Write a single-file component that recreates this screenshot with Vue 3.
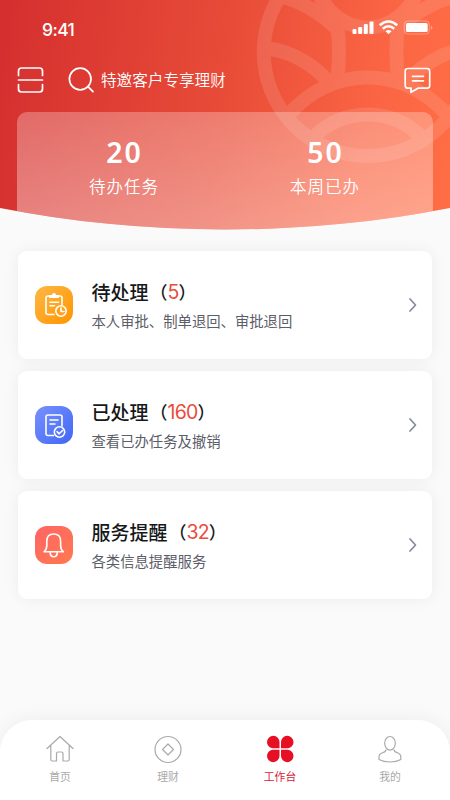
<script setup>
const stats = [
  { value: '20', label: '待办任务' },
  { value: '50', label: '本周已办' },
]
const cards = [
  { icon: 'pending', title: '待处理', count: 5, desc: '本人审批、制单退回、审批退回' },
  { icon: 'done', title: '已处理', count: 160, desc: '查看已办任务及撤销' },
  { icon: 'bell', title: '服务提醒', count: 32, desc: '各类信息提醒服务' },
]
const tabs = [
  { icon: 'home', label: '首页' },
  { icon: 'coin', label: '理财' },
  { icon: 'work', label: '工作台', active: true },
  { icon: 'user', label: '我的' },
]
</script>

<template>
  <div class="screen">
    <header class="hero">
      <svg class="pattern" width="450" height="230" viewBox="0 0 450 230" fill="none">
        <g stroke="#fff" stroke-width="14" opacity="0.11">
          <circle cx="367.7" cy="52" r="104" />
          <path d="M288 115Q322 77.500 367.700 77.500T447.400 115" />
          <path d="M312 139Q335 114.500 367.700 114.500T423.400 139" />
          <path d="M268 48.500Q302 53 329 82M467.400 48.500Q433.400 53 406.400 82" />
          <path d="M337 23Q341 52 337 80M398.400 23Q394.400 52 398.400 80" />
          <path d="M277 -5Q312 4 337 29M458.400 -5Q423.400 4 398.400 29" />
          <path d="M320 -3Q339 27.500 367.700 27.500T415.400 -3" />
        </g>
      </svg>

      <div class="status">
        <span class="time">9:41</span>
        <svg width="82" height="16" viewBox="0 0 82 16" fill="#fff">
          <rect x="0.500" y="9" width="4" height="5" rx="1" />
          <rect x="6.200" y="7" width="4" height="7" rx="1" />
          <rect x="11.800" y="4" width="4" height="10" rx="1" />
          <rect x="17.500" y="1.500" width="4" height="12.500" rx="1" />
          <g fill="none" stroke="#fff" stroke-width="2.500">
            <path d="M27.800 5.200Q36.500 -2.300 45.200 5.200" />
            <path d="M30.800 8.700Q36.500 3.900 42.200 8.700" />
          </g>
          <path d="M33.500 11.200Q36.500 8.700 39.500 11.200L36.500 14.200Z" />
          <rect x="52.300" y="1" width="25" height="13" rx="3.500" fill="none" stroke="#fff" stroke-opacity=".35" />
          <rect x="54" y="3" width="21.700" height="9" rx="1.600" />
          <path d="M79 5.500Q82 7.700 79 10Z" opacity=".4" />
        </svg>
      </div>

      <div class="toolbar">
        <svg class="scan" width="28" height="28" viewBox="0 0 28 28">
          <path d="M2.500 9.500V5Q2.500 2 5.500 2H23.500Q26.500 2 26.500 5V9.500M2.500 14H26.500M2.500 18.500V23Q2.500 26 5.500 26H23.500Q26.500 26 26.500 23V18.500" />
        </svg>
        <svg class="search" width="28" height="28" viewBox="0 0 28 28">
          <circle cx="12.200" cy="13" r="10.800" /><path d="M20.500 21.200L25 25.700" />
        </svg>
        <span class="query">特邀客户专享理财</span>
        <svg class="msg" width="28" height="28" viewBox="0 0 28 28">
          <path d="M5 2.500H24Q26.700 2.500 26.700 5.200V19.500Q26.700 22.200 24 22.200H15L8 26.300V22.200H5Q2.200 22.200 2.200 19.500V5.200Q2.200 2.500 5 2.500Z" />
          <path d="M9.500 10.300H20.500M9.500 14.800H20.500" />
        </svg>
      </div>

      <div class="summary">
        <div v-for="s in stats" :key="s.label" class="stat">
          <strong>{{ s.value }}</strong>
          <span>{{ s.label }}</span>
        </div>
      </div>
    </header>

    <main class="list">
      <section v-for="c in cards" :key="c.icon" class="card">
        <div class="badge" :class="c.icon">
          <svg v-if="c.icon === 'pending'" width="38" height="38" viewBox="0 0 38 38">
            <path d="M19 28.500H13Q11 28.500 11 26.500V12Q11 10 13 10H25Q27 10 27 12V19" />
            <path class="solid" d="M14 9H17Q17 7 19 7T21 9H24V12H14Z" />
            <path d="M15 16.300H23.500M15 19.800H19.500" />
            <circle cx="26" cy="25" r="5.200" /><path d="M26 22V25.500H29" />
          </svg>
          <svg v-else-if="c.icon === 'done'" width="38" height="38" viewBox="0 0 38 38">
            <path d="M18.500 29.500H13Q11 29.500 11 27.500V11Q11 9 13 9H25Q27 9 27 11V20" />
            <path d="M15 14H23M15 18H20" />
            <circle cx="24.500" cy="26" r="5.200" /><path d="M22 25.700L24.200 27.800L27.500 24.500" />
          </svg>
          <svg v-else width="38" height="38" viewBox="0 0 38 38">
            <path d="M9 25.800Q11.800 23.500 11.800 19.500V15.200Q11.800 8 18.700 8T25.600 15.200V19.500Q25.600 23.500 28.400 25.800Z" />
            <path d="M15.200 26.500Q15.200 30.700 18.700 30.700T22.200 26.500" />
          </svg>
        </div>
        <div class="body">
          <h2>{{ c.title }}<i>（</i><em>{{ c.count }}</em><i>）</i></h2>
          <p>{{ c.desc }}</p>
        </div>
        <svg class="arrow" width="10" height="16" viewBox="0 0 10 16">
          <path d="M2 2L7.500 8L2 14" />
        </svg>
      </section>
    </main>

    <nav class="tabs">
      <div v-for="t in tabs" :key="t.icon" class="tab" :class="[t.icon, { active: t.active }]">
        <svg v-if="t.icon === 'home'" width="30" height="30" viewBox="0 0 30 30">
          <path d="M2 13.500L15 1.500L28 13.500M5.800 10.500V24.500Q5.800 26 7.300 26H11.500V18.500Q11.500 17 13 17H16.500Q18 17 18 18.500V26H22.700Q24.200 26 24.200 24.500V10.500" />
        </svg>
        <svg v-else-if="t.icon === 'coin'" width="30" height="30" viewBox="0 0 30 30">
          <circle cx="15" cy="14.500" r="13" /><path d="M15 9L20.500 14.500L15 20L9.500 14.500Z" />
        </svg>
        <svg v-else-if="t.icon === 'work'" width="30" height="30" viewBox="0 0 30 30">
          <path d="M14.500 13.300H7.500A6.250 6.250 0 1 1 14.500 7ZM16 13.300V7A6.250 6.250 0 1 1 23 13.300ZM14.500 14.700V21A6.250 6.250 0 1 1 7.500 14.700ZM16 14.700H23A6.250 6.250 0 1 1 16 21Z" />
        </svg>
        <svg v-else width="30" height="30" viewBox="0 0 30 30">
          <ellipse cx="15" cy="8.300" rx="5.300" ry="6.800" />
          <path d="M11 15Q10.500 17 7 18Q4 19 4 22V24.500Q8.500 27 15 27T25.800 24.500V22Q25.800 19 23 18Q19.500 17 19 15" />
        </svg>
        <span>{{ t.label }}</span>
      </div>
    </nav>
  </div>
</template>

<style>
body { margin: 0; }
</style>

<style scoped>
.screen {
  width: 450px;
  height: 800px;
  display: flex;
  flex-direction: column;
  overflow: hidden;
  background: #fafafa;
  font-family: "Noto Sans CJK SC", sans-serif;
}
.hero {
  position: relative;
  flex: none;
  height: 230px;
  color: #fff;
  background: linear-gradient(98deg, #d5302f 2%, #e84c38 49%, #fa6443 80%, #ff6e45 100%);
  clip-path: circle(1188px at 225px -958.5px);
}
.pattern { position: absolute; left: 0; top: 0; }
.status {
  position: relative;
  display: flex;
  justify-content: space-between;
  align-items: center;
  height: 20px;
  padding: 20px 16px 0 42px;
}
.status svg { margin-bottom: 5px; }
.time {
  font: 500 17.5px/20px Inter, sans-serif;
  letter-spacing: -0.6px;
}
.toolbar {
  position: relative;
  display: flex;
  align-items: center;
  height: 28px;
  padding: 26px 19px 0 16px;
}
.toolbar svg {
  fill: none;
  stroke: #fff;
  stroke-width: 1.7;
  stroke-linecap: round;
  stroke-linejoin: round;
}
.search { margin-left: 24px; }
.query {
  margin-left: 5px;
  padding-bottom: 2px;
  font-size: 15.6px;
  font-weight: 350;
  line-height: 24px;
}
.msg { margin-left: auto; }
.summary {
  position: relative;
  box-sizing: border-box;
  display: grid;
  grid-template-columns: 201px 201px;
  height: 120px;
  margin: 18px 17px 0;
  padding: 25px 0 0 7px;
  border-radius: 10px 10px 0 0;
  background: linear-gradient(180deg, rgba(255, 255, 255, 0.27), rgba(255, 255, 255, 0.4));
}
.stat { display: flex; flex-direction: column; align-items: center; }
.stat strong {
  font: 600 28.5px/30px "Noto Sans", sans-serif;
  letter-spacing: 2px;
}
.stat span {
  margin-top: 6px;
  margin-right: 1px;
  font-size: 16.5px;
  font-weight: 350;
  line-height: 26px;
  letter-spacing: 1px;
}
.list {
  display: flex;
  flex-direction: column;
  gap: 12px;
  padding: 21px 18px 0;
}
.card {
  box-sizing: border-box;
  display: flex;
  align-items: center;
  height: 108px;
  padding: 0 14px 0 17px;
  border-radius: 9px;
  background: #fff;
  box-shadow: 0 0 16px rgba(0, 0, 0, 0.06);
}
.badge { width: 38px; height: 38px; border-radius: 12px; }
.badge svg {
  display: block;
  fill: none;
  stroke: #fff;
  stroke-width: 1.6;
  stroke-linecap: round;
  stroke-linejoin: round;
}
.badge .solid { fill: #fff; stroke: none; }
.pending { background: linear-gradient(135deg, #ffb744, #ff9500); }
.done { background: linear-gradient(135deg, #7891ff, #4067f5); }
.bell { background: linear-gradient(135deg, #ff6564, #ff7950); }
.body { margin-left: 18.5px; }
h2 {
  display: flex;
  align-items: center;
  margin: 0;
  color: #17181a;
  font-size: 19px;
  font-weight: 500;
  line-height: 28px;
}
h2 i {
  width: 19px;
  font-size: 17.5px;
  font-style: normal;
  text-align: right;
}
h2 i:last-child { text-align: left; }
em {
  color: #eb4b3b;
  font-family: Inter, sans-serif;
  font-size: 19.5px;
  font-style: normal;
  font-weight: 400;
  letter-spacing: -0.8px;
}
p {
  margin: 3px 0 0;
  color: #5b5d68;
  font-size: 14.35px;
  line-height: 24px;
}
.arrow {
  margin-left: auto;
  fill: none;
  stroke: #858b9b;
  stroke-width: 1.7;
  stroke-linecap: round;
  stroke-linejoin: round;
}
.tabs {
  box-sizing: border-box;
  display: grid;
  grid-template-columns: 108px 108px 116px 104px;
  padding: 15px 0 0 6px;
  height: 80px;
  margin-top: auto;
  border-radius: 32px 32px 0 0;
  background: #fff;
  box-shadow: 0 0 20px rgba(0, 0, 0, 0.06);
}
.tab {
  display: flex;
  flex-direction: column;
  align-items: center;
  color: #aaa;
  font-size: 10.8px;
  line-height: 18px;
}
.tab svg { fill: none; stroke: currentColor; stroke-width: 1.2; stroke-linejoin: round; stroke-linecap: round; }
.tab span { margin-top: 2px; }
.tab.active { color: #d81939; font-weight: 400; }
.tab.active svg { fill: #e60f24; stroke: none; }
</style>
